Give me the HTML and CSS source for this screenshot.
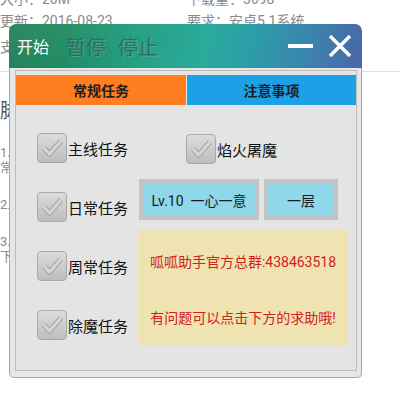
FILE: index.html
```html
<!DOCTYPE html>
<html lang="zh-CN">
<head>
  <meta charset="UTF-8">
  <meta name="viewport" content="width=device-width, initial-scale=1.0">
  <title>呱呱助手</title>
  <link rel="stylesheet" href="styles.css">
</head>
<body>
  <div class="page">
    <div class="meta">
      <div class="meta-row"><span class="meta-cell">大小：20M</span><span>下载量：3698</span></div>
      <div class="meta-row"><span class="meta-cell">更新：2016-08-23</span><span>要求：安卓5.1系统</span></div>
      <div class="meta-row third"><span class="meta-cell">支持：免Root</span></div>
    </div>
    <div class="intro">
      <h2>脚本介绍</h2>
      <p>1. 自动完成主线任务与支线任务<br>常规任务全部支持</p>
      <p>2. 日常任务一键完成</p>
      <p>3. 周常任务自动领取<br>下载后即可使用</p>
    </div>
  </div>

  <div class="window">
    <div class="titlebar">
      <span class="tb-start">开始</span>
      <span class="tb-btn pause">暂停</span>
      <span class="tb-btn stop">停止</span>
      <span class="tb-min"></span>
      <svg class="tb-close" width="24" height="24" viewBox="0 0 24 24">
        <path d="M2 2 L22 22 M22 2 L2 22" stroke="#fff" stroke-width="3.4" fill="none"/>
      </svg>
    </div>
    <div class="frame">
      <div class="panel">
        <div class="tabs">
          <div class="tab tab-main">常规任务</div>
          <div class="tab tab-note">注意事项</div>
        </div>
        <div class="content">
          <div class="col-left">
            <label class="check"><span class="box"><svg width="30" height="30" viewBox="0 0 30 30"><polyline points="7,15 12.5,21 24,8" fill="none" stroke="#a9a9a9" stroke-width="5.5" stroke-linejoin="round"/><polyline points="7,15 12.5,21 24,8" fill="none" stroke="#d6d6d6" stroke-width="3" stroke-linejoin="round"/></svg></span>主线任务</label>
            <label class="check"><span class="box"><svg width="30" height="30" viewBox="0 0 30 30"><polyline points="7,15 12.5,21 24,8" fill="none" stroke="#a9a9a9" stroke-width="5.5" stroke-linejoin="round"/><polyline points="7,15 12.5,21 24,8" fill="none" stroke="#d6d6d6" stroke-width="3" stroke-linejoin="round"/></svg></span>日常任务</label>
            <label class="check"><span class="box"><svg width="30" height="30" viewBox="0 0 30 30"><polyline points="7,15 12.5,21 24,8" fill="none" stroke="#a9a9a9" stroke-width="5.5" stroke-linejoin="round"/><polyline points="7,15 12.5,21 24,8" fill="none" stroke="#d6d6d6" stroke-width="3" stroke-linejoin="round"/></svg></span>周常任务</label>
            <label class="check"><span class="box"><svg width="30" height="30" viewBox="0 0 30 30"><polyline points="7,15 12.5,21 24,8" fill="none" stroke="#a9a9a9" stroke-width="5.5" stroke-linejoin="round"/><polyline points="7,15 12.5,21 24,8" fill="none" stroke="#d6d6d6" stroke-width="3" stroke-linejoin="round"/></svg></span>除魔任务</label>
          </div>
          <div class="col-right">
            <label class="check fire"><span class="box"><svg width="30" height="30" viewBox="0 0 30 30"><polyline points="7,15 12.5,21 24,8" fill="none" stroke="#a9a9a9" stroke-width="5.5" stroke-linejoin="round"/><polyline points="7,15 12.5,21 24,8" fill="none" stroke="#d6d6d6" stroke-width="3" stroke-linejoin="round"/></svg></span>焰火屠魔</label>
            <div class="buttons">
              <div class="btn btn-wide"><span>Lv.10&nbsp; 一心一意</span></div>
              <div class="btn btn-small"><span>一层</span></div>
            </div>
            <div class="notice">
              <p class="notice-group">呱呱助手官方总群:438463518</p>
              <p class="notice-help">有问题可以点击下方的求助哦!</p>
            </div>
          </div>
        </div>
      </div>
    </div>
  </div>
</body>
</html>
```

FILE: styles.css
```css
body {
  margin: 0;
  padding: 0;
  background: #ffffff;
  font-family: Roboto, "Noto Sans CJK SC", sans-serif;
  color: #222;
  overflow: hidden;
}

.page {
  color: #8a8a8a;
}

.meta {
  margin-top: -12px;
  font-size: 14px;
}

.meta-row {
  display: flex;
  line-height: 22px;
}

.meta-row.third {
  margin-top: 4px;
}

.meta-cell {
  width: 187px;
}

.intro {
  border-top: 1px solid #dddddd;
  margin-top: 13px;
}

.intro h2 {
  margin: 27px 0 0;
  font-size: 20px;
  line-height: 24px;
  font-weight: normal;
  color: #555;
}

.intro p {
  margin: 22px 0 0;
  font-size: 13px;
  line-height: 15px;
}

/* floating helper window */
.window {
  position: absolute;
  left: 9px;
  top: 24px;
  width: 353px;
  height: 354px;
  display: flex;
  flex-direction: column;
}

.titlebar {
  height: 44px;
  flex: none;
  display: flex;
  align-items: center;
  padding: 0 10px 0 8px;
  border-radius: 7px 7px 0 0;
  background:
    linear-gradient(160deg, rgba(255, 255, 255, 0.08) 0%, rgba(255, 255, 255, 0) 40%),
    linear-gradient(100deg, #1d7d56 0%, #1f8a62 16%, #25a184 38%, #2aaa9c 55%, #2b9ea8 68%, #3b84ad 84%, #4a67a6 100%);
}

.tb-start {
  color: #fff;
  font-size: 16px;
}

.tb-btn {
  font-size: 20px;
  color: #2f6c63;
  text-shadow: 1px 1px 0 rgba(255, 255, 255, 0.18);
}

.pause {
  margin-left: 17px;
}

.stop {
  margin-left: 12px;
}

.tb-min {
  margin-left: auto;
  width: 25px;
  height: 4px;
  background: #fff;
}

.tb-close {
  margin-left: 15px;
}

.frame {
  flex: 1;
  display: flex;
  padding: 2px 4px 6px 5px;
  background: #e6e6e6;
  border: 1px solid #a8a8a8;
  border-top: none;
  border-radius: 0 0 5px 5px;
}

.panel {
  flex: 1;
  display: flex;
  flex-direction: column;
  padding-top: 4px;
  border: 1px solid #bcbcbc;
  background: #e4e4e4;
}

.tabs {
  display: flex;
  height: 30px;
}

.tab {
  display: flex;
  align-items: center;
  justify-content: center;
  font-size: 14px;
  font-weight: bold;
  color: #1e1e1e;
}

.tab-main {
  width: 170px;
  background: #ff7e1f;
}

.tab-note {
  flex: 1;
  margin-left: 1px;
  background: #1ca0e6;
}

.content {
  display: flex;
}

.col-left {
  width: 122px;
  padding-top: 28px;
  display: flex;
  flex-direction: column;
  gap: 29px;
}

.check {
  display: flex;
  align-items: center;
  height: 30px;
  font-size: 15px;
  color: #111;
}

.col-left .check {
  padding-left: 21px;
}

.box {
  width: 30px;
  height: 30px;
  margin-right: 1px;
  box-sizing: border-box;
  border: 1px solid #a9a9a9;
  border-radius: 4px;
  background: linear-gradient(#dcdcdc, #bdbdbd);
  display: flex;
}

.box svg {
  margin: -1px;
}

.col-right {
  flex: 1;
  padding-top: 29px;
}

.check.fire {
  padding-left: 48px;
}

.buttons {
  display: flex;
  gap: 5px;
  margin: 15px 0 0 1px;
}

.btn {
  height: 41px;
  box-sizing: border-box;
  padding: 4px;
  background: #c3c3c3;
}

.btn span {
  display: flex;
  align-items: center;
  justify-content: center;
  height: 100%;
  background: #8fd7ea;
  font-size: 14px;
  color: #1a1a1a;
}

.btn-wide {
  width: 120px;
}

.btn-small {
  width: 74px;
}

.notice {
  width: 210px;
  height: 117px;
  box-sizing: border-box;
  margin-top: 9px;
  padding-top: 24px;
  background: #efe4b1;
  color: #d0211c;
  font-size: 14px;
  text-align: center;
}

.notice p {
  margin: 0;
  line-height: 18px;
}

.notice-help {
  margin-top: 38px !important;
}
```
